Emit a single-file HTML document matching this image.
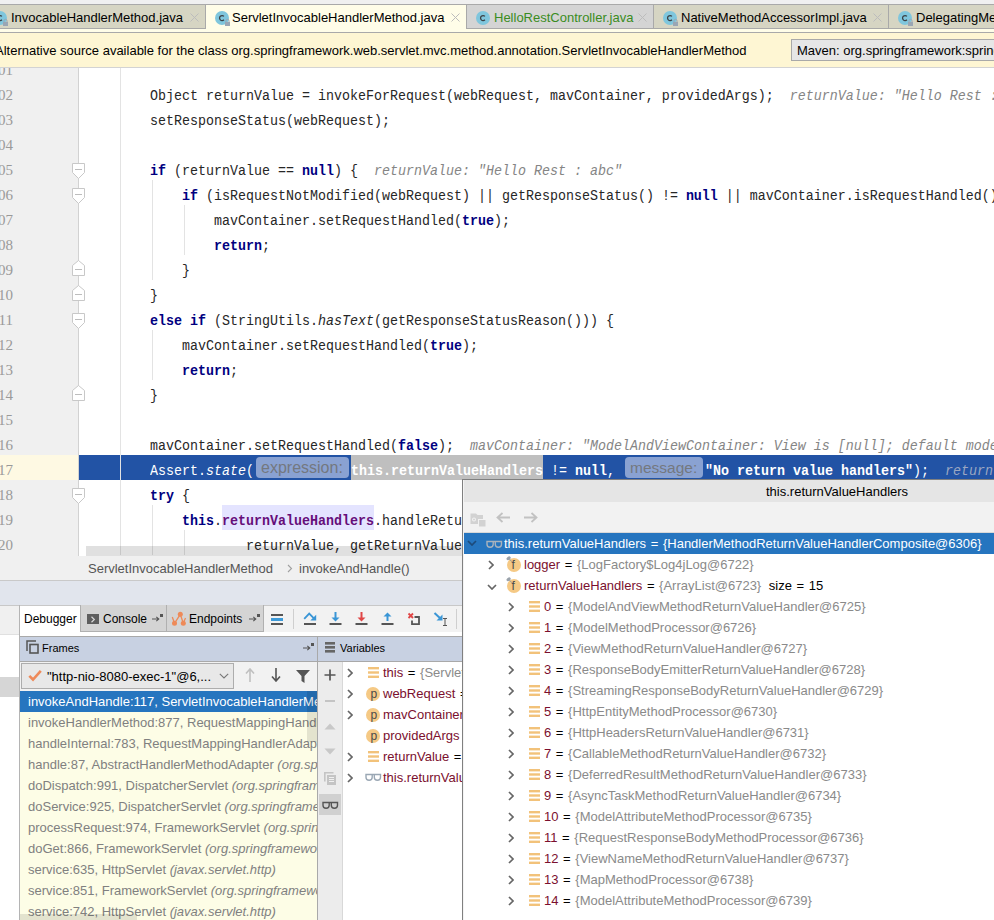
<!DOCTYPE html>
<html><head><meta charset="utf-8"><style>
*{margin:0;padding:0;box-sizing:border-box}
html,body{width:994px;height:920px;overflow:hidden;background:#fff}
body{position:relative;font-family:"Liberation Sans",sans-serif;font-size:13px;color:#000}
.a{position:absolute}
.ui{position:absolute;font-family:"Liberation Sans",sans-serif;font-size:13px;white-space:pre;line-height:15px}
.mono{font-family:"Liberation Mono",monospace;font-size:13.333px;white-space:pre;line-height:15px;transform:scaleY(1.15);transform-origin:0 11px}
.cic{position:absolute;width:14px;height:14px;border-radius:50%;background:#7fc6dd}
.cic:after{content:"c";position:absolute;left:3px;top:-1px;font:bold 11px "Liberation Sans";color:#3a3f44}
.lock{position:absolute;width:6px;height:5px;background:#9aa6b4}
.lock:before{content:"";position:absolute;left:1px;top:-3px;width:4px;height:3px;border:1px solid #9aa6b4;border-bottom:none;border-radius:2px 2px 0 0}
.kw{color:#000080;font-weight:bold}
.fld{color:#660e7a;font-weight:bold}
.hint{color:#858585;font-style:italic}
</style></head><body>
<div class="a" style="left:0px;top:67px;width:79px;height:489px;background:#f0f0f0;"></div>
<div class="a" style="left:78px;top:67px;width:1px;height:489px;background:#d2d2d2;"></div>
<div class="a" style="left:0px;top:455px;width:78px;height:25px;background:#fef9e3;"></div>
<div class="a" style="left:79px;top:455px;width:915px;height:25px;background:#2253a5;"></div>
<div class="a" style="left:222px;top:505px;width:152px;height:25px;background:#e4e4ff;"></div>
<div class="a" style="left:120px;top:55px;width:1px;height:500px;background:#e3e3e3;"></div>
<div class="a" style="left:152px;top:180px;width:1px;height:100px;background:#e3e3e3;"></div>
<div class="a" style="left:184px;top:205px;width:1px;height:50px;background:#e3e3e3;"></div>
<div class="a" style="left:152px;top:330px;width:1px;height:50px;background:#e3e3e3;"></div>
<div class="a" style="left:152px;top:505px;width:1px;height:50px;background:#e3e3e3;"></div>
<div class="a" style="left:184px;top:530px;width:1px;height:25px;background:#e3e3e3;"></div>
<div style="position:absolute;left:-20px;width:33px;text-align:right;top:61px;color:#9a9a9a;font-family:'Liberation Serif',serif;font-size:15px;line-height:18px;white-space:pre">101</div>
<div style="position:absolute;left:-20px;width:33px;text-align:right;top:86px;color:#9a9a9a;font-family:'Liberation Serif',serif;font-size:15px;line-height:18px;white-space:pre">102</div>
<div style="position:absolute;left:-20px;width:33px;text-align:right;top:111px;color:#9a9a9a;font-family:'Liberation Serif',serif;font-size:15px;line-height:18px;white-space:pre">103</div>
<div style="position:absolute;left:-20px;width:33px;text-align:right;top:136px;color:#9a9a9a;font-family:'Liberation Serif',serif;font-size:15px;line-height:18px;white-space:pre">104</div>
<div style="position:absolute;left:-20px;width:33px;text-align:right;top:161px;color:#9a9a9a;font-family:'Liberation Serif',serif;font-size:15px;line-height:18px;white-space:pre">105</div>
<div style="position:absolute;left:-20px;width:33px;text-align:right;top:186px;color:#9a9a9a;font-family:'Liberation Serif',serif;font-size:15px;line-height:18px;white-space:pre">106</div>
<div style="position:absolute;left:-20px;width:33px;text-align:right;top:211px;color:#9a9a9a;font-family:'Liberation Serif',serif;font-size:15px;line-height:18px;white-space:pre">107</div>
<div style="position:absolute;left:-20px;width:33px;text-align:right;top:236px;color:#9a9a9a;font-family:'Liberation Serif',serif;font-size:15px;line-height:18px;white-space:pre">108</div>
<div style="position:absolute;left:-20px;width:33px;text-align:right;top:261px;color:#9a9a9a;font-family:'Liberation Serif',serif;font-size:15px;line-height:18px;white-space:pre">109</div>
<div style="position:absolute;left:-20px;width:33px;text-align:right;top:286px;color:#9a9a9a;font-family:'Liberation Serif',serif;font-size:15px;line-height:18px;white-space:pre">110</div>
<div style="position:absolute;left:-20px;width:33px;text-align:right;top:311px;color:#9a9a9a;font-family:'Liberation Serif',serif;font-size:15px;line-height:18px;white-space:pre">111</div>
<div style="position:absolute;left:-20px;width:33px;text-align:right;top:336px;color:#9a9a9a;font-family:'Liberation Serif',serif;font-size:15px;line-height:18px;white-space:pre">112</div>
<div style="position:absolute;left:-20px;width:33px;text-align:right;top:361px;color:#9a9a9a;font-family:'Liberation Serif',serif;font-size:15px;line-height:18px;white-space:pre">113</div>
<div style="position:absolute;left:-20px;width:33px;text-align:right;top:386px;color:#9a9a9a;font-family:'Liberation Serif',serif;font-size:15px;line-height:18px;white-space:pre">114</div>
<div style="position:absolute;left:-20px;width:33px;text-align:right;top:411px;color:#9a9a9a;font-family:'Liberation Serif',serif;font-size:15px;line-height:18px;white-space:pre">115</div>
<div style="position:absolute;left:-20px;width:33px;text-align:right;top:436px;color:#9a9a9a;font-family:'Liberation Serif',serif;font-size:15px;line-height:18px;white-space:pre">116</div>
<div style="position:absolute;left:-20px;width:33px;text-align:right;top:461px;color:#9a9a9a;font-family:'Liberation Serif',serif;font-size:15px;line-height:18px;white-space:pre">117</div>
<div style="position:absolute;left:-20px;width:33px;text-align:right;top:486px;color:#9a9a9a;font-family:'Liberation Serif',serif;font-size:15px;line-height:18px;white-space:pre">118</div>
<div style="position:absolute;left:-20px;width:33px;text-align:right;top:511px;color:#9a9a9a;font-family:'Liberation Serif',serif;font-size:15px;line-height:18px;white-space:pre">119</div>
<div style="position:absolute;left:-20px;width:33px;text-align:right;top:536px;color:#9a9a9a;font-family:'Liberation Serif',serif;font-size:15px;line-height:18px;white-space:pre">120</div>
<div class="mono" style="position:absolute;left:86px;top:89px;color:#262626">        Object returnValue = invokeForRequest(webRequest, mavContainer, providedArgs);  <span class="hint">returnValue: "Hello Rest : abc"</span></div>
<div class="mono" style="position:absolute;left:86px;top:114px;color:#262626">        setResponseStatus(webRequest);</div>
<div class="mono" style="position:absolute;left:86px;top:164px;color:#262626">        <span class="kw">if</span> (returnValue == <span class="kw">null</span>) {  <span class="hint">returnValue: "Hello Rest : abc"</span></div>
<div class="mono" style="position:absolute;left:86px;top:189px;color:#262626">            <span class="kw">if</span> (isRequestNotModified(webRequest) || getResponseStatus() != <span class="kw">null</span> || mavContainer.isRequestHandled()) {</div>
<div class="mono" style="position:absolute;left:86px;top:214px;color:#262626">                mavContainer.setRequestHandled(<span class="kw">true</span>);</div>
<div class="mono" style="position:absolute;left:86px;top:239px;color:#262626">                <span class="kw">return</span>;</div>
<div class="mono" style="position:absolute;left:86px;top:264px;color:#262626">            }</div>
<div class="mono" style="position:absolute;left:86px;top:289px;color:#262626">        }</div>
<div class="mono" style="position:absolute;left:86px;top:314px;color:#262626">        <span class="kw">else if</span> (StringUtils.<i>hasText</i>(getResponseStatusReason())) {</div>
<div class="mono" style="position:absolute;left:86px;top:339px;color:#262626">            mavContainer.setRequestHandled(<span class="kw">true</span>);</div>
<div class="mono" style="position:absolute;left:86px;top:364px;color:#262626">            <span class="kw">return</span>;</div>
<div class="mono" style="position:absolute;left:86px;top:389px;color:#262626">        }</div>
<div class="mono" style="position:absolute;left:86px;top:439px;color:#262626">        mavContainer.setRequestHandled(<span class="kw">false</span>);  <span class="hint">mavContainer: "ModelAndViewContainer: View is [null]; default model {}"</span></div>
<div class="mono" style="position:absolute;left:86px;top:489px;color:#262626">        <span class="kw">try</span> {</div>
<div class="mono" style="position:absolute;left:86px;top:514px;color:#262626">            <span class="kw">this</span>.<span class="fld">returnValueHandlers</span>.handleReturnValue(</div>
<div class="mono" style="position:absolute;left:86px;top:539px;color:#262626">                    returnValue, getReturnValueType(returnValue), mavContainer, webRequest);</div>
<div class="mono" style="position:absolute;left:150px;top:464px;color:#fff;">Assert.<i>state</i>(</div>
<div class="a" style="left:256px;top:457px;width:93px;height:21px;background:#8aa2d2;border-radius:4px"></div>
<div class="ui" style="left:261px;top:459px;color:#74787f;font-size:16px;line-height:17px">expression:</div>
<div class="a" style="left:351px;top:455px;width:192px;height:25px;background:#bfbfbf;"></div>
<div class="mono" style="position:absolute;left:351px;top:464px;color:#fff;"><b>this.returnValueHandlers</b></div>
<div class="mono" style="position:absolute;left:543px;top:464px;color:#fff;"> != <b>null</b>, </div>
<div class="a" style="left:625px;top:457px;width:78px;height:21px;background:#8aa2d2;border-radius:4px"></div>
<div class="ui" style="left:630px;top:459px;color:#74787f;font-size:15.5px;line-height:17px">message:</div>
<div class="mono" style="position:absolute;left:705px;top:464px;color:#fff;"><b>"No return value handlers"</b>);  </div>
<div class="mono" style="position:absolute;left:945px;top:464px;color:#9ba7c2;"><i>returnValue</i></div>
<svg class="a" style="left:72px;top:163px" width="13" height="16" viewBox="0 0 13 16"><path d="M0.5 0.5H12.5V9.5L6.5 15.5L0.5 9.5Z" fill="#fff" stroke="#c8c8c8"/><path d="M3 6.5H10" stroke="#bdbdbd"/></svg>
<svg class="a" style="left:72px;top:188px" width="13" height="16" viewBox="0 0 13 16"><path d="M0.5 0.5H12.5V9.5L6.5 15.5L0.5 9.5Z" fill="#fff" stroke="#c8c8c8"/><path d="M3 6.5H10" stroke="#bdbdbd"/></svg>
<svg class="a" style="left:72px;top:313px" width="13" height="16" viewBox="0 0 13 16"><path d="M0.5 0.5H12.5V9.5L6.5 15.5L0.5 9.5Z" fill="#fff" stroke="#c8c8c8"/><path d="M3 6.5H10" stroke="#bdbdbd"/></svg>
<svg class="a" style="left:72px;top:488px" width="13" height="16" viewBox="0 0 13 16"><path d="M0.5 0.5H12.5V9.5L6.5 15.5L0.5 9.5Z" fill="#fff" stroke="#c8c8c8"/><path d="M3 6.5H10" stroke="#bdbdbd"/></svg>
<svg class="a" style="left:72px;top:260px" width="13" height="16" viewBox="0 0 13 16"><path d="M0.5 5.5L6.5 0.5L12.5 5.5V15.5H0.5Z" fill="#fff" stroke="#c8c8c8"/><path d="M3 9.5H10" stroke="#bdbdbd"/></svg>
<svg class="a" style="left:72px;top:285px" width="13" height="16" viewBox="0 0 13 16"><path d="M0.5 5.5L6.5 0.5L12.5 5.5V15.5H0.5Z" fill="#fff" stroke="#c8c8c8"/><path d="M3 9.5H10" stroke="#bdbdbd"/></svg>
<svg class="a" style="left:72px;top:385px" width="13" height="16" viewBox="0 0 13 16"><path d="M0.5 5.5L6.5 0.5L12.5 5.5V15.5H0.5Z" fill="#fff" stroke="#c8c8c8"/><path d="M3 9.5H10" stroke="#bdbdbd"/></svg>
<div class="a" style="left:86px;top:546px;width:900px;height:10px;background:rgba(0,0,0,0.12);"></div>
<div class="a" style="left:0px;top:556px;width:994px;height:24px;background:#f0f0f0;"></div>
<div class="a" style="left:0px;top:580px;width:994px;height:1px;background:#c9c9c9;"></div>
<div class="ui" style="left:88px;top:561px;color:#555;">ServletInvocableHandlerMethod</div>
<svg class="a" style="left:287px;top:564px" width="6" height="9" viewBox="0 0 6 9"><path d="M1 1L4.5 4.5L1 8" stroke="#a0a0a0" fill="none" stroke-width="1.1"/></svg>
<div class="ui" style="left:299px;top:561px;color:#555;">invokeAndHandle()</div>
<div class="a" style="left:0px;top:581px;width:994px;height:24px;background:#e1e5ed;"></div>
<div class="a" style="left:0px;top:605px;width:994px;height:1px;background:#c8c8c8;"></div>
<div class="a" style="left:0px;top:606px;width:19px;height:28px;background:#f0f0f0;"></div>
<div class="a" style="left:0px;top:634px;width:19px;height:1px;background:#e0e0e0;"></div>
<div class="a" style="left:0px;top:677px;width:19px;height:20px;background:#d6d6d6;"></div>
<div class="a" style="left:19px;top:605px;width:1px;height:315px;background:#b4b4b4;"></div>
<div class="a" style="left:20px;top:606px;width:974px;height:31px;background:#f2f2f2;"></div>
<div class="a" style="left:20px;top:606px;width:60px;height:31px;background:#ffffff;"></div>
<div class="ui" style="left:24px;top:612px;color:#000;font-size:12px">Debugger</div>
<div class="a" style="left:80px;top:605px;width:1px;height:27px;background:#b0b0b0;"></div>
<div class="a" style="left:81px;top:605px;width:86px;height:27px;background:#d4d4d4;"></div>
<div class="a" style="left:81px;top:631px;width:86px;height:1px;background:#b0b0b0;"></div>
<div class="a" style="left:166px;top:605px;width:1px;height:27px;background:#b0b0b0;"></div>
<div class="a" style="left:167px;top:605px;width:97px;height:27px;background:#d4d4d4;"></div>
<div class="a" style="left:167px;top:631px;width:97px;height:1px;background:#b0b0b0;"></div>
<div class="a" style="left:263px;top:605px;width:1px;height:27px;background:#b0b0b0;"></div>
<div class="a" style="left:87px;top:614px;width:12px;height:10px;background:#5e5e5e;"></div>
<svg class="a" style="left:90px;top:616px" width="6" height="7" viewBox="0 0 6 7"><path d="M1.5 0.8L4.3 3.5L1.5 6.2" stroke="#d8d8d8" fill="none" stroke-width="1.2"/></svg>
<div class="ui" style="left:103px;top:612px;color:#000;font-size:12px">Console</div>
<svg class="a" style="left:152px;top:614px" width="12" height="8" viewBox="0 0 12 8"><path d="M0 5H6.5M4.3 2.8L6.8 5L4.3 7.2" stroke="#555" fill="none" stroke-width="1.1"/><rect x="8" y="0" width="3" height="3" fill="#555"/></svg>
<svg class="a" style="left:171px;top:611px" width="16" height="16" viewBox="0 0 16 16"><path d="M3.5 12.3L9.3 3.3L12.3 12.3M3.5 12.3L1.3 6M12.3 12.3L14.5 7" stroke="#ee8a58" fill="none" stroke-width="1.3"/><circle cx="9.3" cy="3.3" r="2.5" fill="#ee8a58"/><circle cx="3.5" cy="12.3" r="2.5" fill="#ee8a58"/><circle cx="12.3" cy="12.3" r="2.5" fill="#ee8a58"/></svg>
<div class="ui" style="left:189px;top:612px;color:#000;font-size:12px">Endpoints</div>
<svg class="a" style="left:249px;top:614px" width="12" height="8" viewBox="0 0 12 8"><path d="M0 5H6.5M4.3 2.8L6.8 5L4.3 7.2" stroke="#555" fill="none" stroke-width="1.1"/><rect x="8" y="0" width="3" height="3" fill="#555"/></svg>
<svg class="a" style="left:270px;top:613px" width="14" height="12" viewBox="0 0 14 12"><rect x="1" y="1" width="12" height="2" fill="#555"/><rect x="1" y="5" width="12" height="3" fill="#3d9ad8"/><rect x="1" y="10" width="12" height="2" fill="#555"/></svg>
<div class="a" style="left:293px;top:609px;width:1px;height:20px;background:#cfcfcf;"></div>
<svg class="a" style="left:302px;top:611px" width="16" height="16" viewBox="0 0 16 16"><path d="M2.2 7.8L7.2 2.6L12.2 7.6" stroke="#3a96d6" fill="none" stroke-width="1.8"/><path d="M8.3 9.6H14.2V3.8Z" fill="#3a96d6"/><rect x="2" y="12" width="12" height="2" fill="#555"/></svg>
<svg class="a" style="left:329px;top:611px" width="16" height="16" viewBox="0 0 16 16"><path d="M6.5 1V8" stroke="#3a96d6" stroke-width="2"/><path d="M2.5 6.5H10.5L6.5 10.5Z" fill="#3a96d6"/><rect x="0.5" y="12" width="12" height="2" fill="#555"/></svg>
<svg class="a" style="left:355px;top:611px" width="16" height="16" viewBox="0 0 16 16"><path d="M6.5 1V8" stroke="#e04646" stroke-width="2"/><path d="M2.5 6.5H10.5L6.5 10.5Z" fill="#e04646"/><rect x="0.5" y="12" width="12" height="2" fill="#555"/></svg>
<svg class="a" style="left:381px;top:611px" width="16" height="16" viewBox="0 0 16 16"><path d="M6.5 4V10" stroke="#3a96d6" stroke-width="2"/><path d="M2.5 5.5H10.5L6.5 1.5Z" fill="#3a96d6"/><rect x="0.5" y="12" width="12" height="2" fill="#555"/></svg>
<svg class="a" style="left:407px;top:611px" width="16" height="16" viewBox="0 0 16 16"><path d="M1.5 2.5L6 7M6 2.5L1.5 7" stroke="#e04646" stroke-width="1.8"/><path d="M7.5 6H12V13.2H5V9.5" stroke="#555" fill="none" stroke-width="1.8"/></svg>
<svg class="a" style="left:433px;top:611px" width="16" height="16" viewBox="0 0 16 16"><path d="M1.5 2L8 8" stroke="#3a96d6" stroke-width="2"/><path d="M9.5 3.5V9.5H3.5Z" fill="#3a96d6"/><path d="M10 7.5H14M10 14.5H14M12 7.5V14.5" stroke="#555" stroke-width="1"/></svg>
<div class="a" style="left:456px;top:609px;width:1px;height:20px;background:#cfcfcf;"></div>
<div class="a" style="left:20px;top:632px;width:974px;height:4px;background:#ffffff;"></div>
<div class="a" style="left:20px;top:636px;width:974px;height:1px;background:#a9a9a9;"></div>
<div class="a" style="left:20px;top:637px;width:297px;height:24px;background:#c8d1e2;"></div>
<div class="a" style="left:317px;top:637px;width:1px;height:283px;background:#a9a9a9;"></div>
<div class="a" style="left:318px;top:637px;width:676px;height:24px;background:#c8d1e2;"></div>
<div class="a" style="left:20px;top:661px;width:974px;height:1px;background:#a9a9a9;"></div>
<svg class="a" style="left:26px;top:640px" width="13" height="14" viewBox="0 0 13 14"><path d="M1 11V1H10" stroke="#555" fill="none" stroke-width="1.5"/><rect x="4" y="4.5" width="8" height="8.5" stroke="#555" fill="none" stroke-width="1.6"/></svg>
<div class="ui" style="left:42px;top:641px;color:#000;font-size:11px">Frames</div>
<svg class="a" style="left:303px;top:643px" width="12" height="8" viewBox="0 0 12 8"><path d="M0 5H6.5M4.3 2.8L6.8 5L4.3 7.2" stroke="#555" fill="none" stroke-width="1.1"/><rect x="8" y="0" width="3" height="3" fill="#555"/></svg>
<svg class="a" style="left:325px;top:642px" width="10" height="11" viewBox="0 0 10 11"><rect x="0" y="0" width="10" height="2.6" fill="#666"/><rect x="0" y="4" width="10" height="2.6" fill="#666"/><rect x="0" y="8" width="10" height="2.6" fill="#666"/></svg>
<div class="ui" style="left:340px;top:641px;color:#000;font-size:11px">Variables</div>
<div class="a" style="left:20px;top:662px;width:297px;height:29px;background:#f2f2f2;"></div>
<div class="a" style="left:21px;top:663px;width:213px;height:26px;background:#e8e8e8;border:1px solid #adadad"></div>
<svg class="a" style="left:28px;top:669px" width="14" height="13" viewBox="0 0 14 13"><path d="M1.3 6.8L5 10.5L12.8 1.8" stroke="#ee8a5a" fill="none" stroke-width="2.6"/></svg>
<div class="ui" style="left:47px;top:669px;color:#000;">"http-nio-8080-exec-1"@6,...</div>
<svg class="a" style="left:219px;top:673px" width="10" height="6" viewBox="0 0 10 6"><path d="M0.8 0.8L5 5L9.2 0.8" stroke="#777" fill="none" stroke-width="1.1"/></svg>
<svg class="a" style="left:245px;top:668px" width="10" height="14" viewBox="0 0 10 14"><path d="M5 1V14M1 5.5L5 1L9 5.5" stroke="#c0c0c0" fill="none" stroke-width="1.6"/></svg>
<svg class="a" style="left:271px;top:668px" width="10" height="14" viewBox="0 0 10 14"><path d="M5 0V13M1 8.5L5 13L9 8.5" stroke="#555" fill="none" stroke-width="1.6"/></svg>
<svg class="a" style="left:296px;top:670px" width="14" height="13" viewBox="0 0 14 13"><path d="M0 0H14L8.5 6V13L5.5 11V6Z" fill="#555"/></svg>
<div class="a" style="left:20px;top:691px;width:297px;height:229px;background:#fdfde6;"></div>
<div class="a" style="left:20px;top:691px;width:297px;height:21px;background:#2675bf;"></div>
<div class="a" style="left:20px;top:691px;width:297px;height:229px;overflow:hidden">
<div class="ui" style="left:8px;top:3px;color:#fff">invokeAndHandle:117, ServletInvocableHandlerMethod<i> (org.springframework.web.servlet.mvc.method.annotation)</i></div>
<div class="ui" style="left:8px;top:24px;color:#808080">invokeHandlerMethod:877, RequestMappingHandlerAdapter<i> (org.springframework.web.servlet.mvc.method.annotation)</i></div>
<div class="ui" style="left:8px;top:45px;color:#808080">handleInternal:783, RequestMappingHandlerAdapter<i> (org.springframework.web.servlet.mvc.method.annotation)</i></div>
<div class="ui" style="left:8px;top:66px;color:#808080">handle:87, AbstractHandlerMethodAdapter<i> (org.springframework.web.servlet.mvc.method)</i></div>
<div class="ui" style="left:8px;top:87px;color:#808080">doDispatch:991, DispatcherServlet<i> (org.springframework.web.servlet)</i></div>
<div class="ui" style="left:8px;top:108px;color:#808080">doService:925, DispatcherServlet<i> (org.springframework.web.servlet)</i></div>
<div class="ui" style="left:8px;top:129px;color:#808080">processRequest:974, FrameworkServlet<i> (org.springframework.web.servlet)</i></div>
<div class="ui" style="left:8px;top:150px;color:#808080">doGet:866, FrameworkServlet<i> (org.springframework.web.servlet)</i></div>
<div class="ui" style="left:8px;top:171px;color:#808080">service:635, HttpServlet<i> (javax.servlet.http)</i></div>
<div class="ui" style="left:8px;top:192px;color:#808080">service:851, FrameworkServlet<i> (org.springframework.web.servlet)</i></div>
<div class="ui" style="left:8px;top:213px;color:#808080">service:742, HttpServlet<i> (javax.servlet.http)</i></div>
</div>
<div class="a" style="left:307px;top:691px;width:10px;height:51px;background:rgba(0,0,0,0.1);"></div>
<div class="a" style="left:20px;top:914px;width:117px;height:6px;background:rgba(0,0,0,0.1);"></div>
<div class="a" style="left:318px;top:662px;width:24px;height:258px;background:#ececec;"></div>
<div class="a" style="left:342px;top:662px;width:1px;height:258px;background:#d8d8d8;"></div>
<svg class="a" style="left:324px;top:669px" width="12" height="12" viewBox="0 0 12 12"><path d="M6 0.5V11.5M0.5 6H11.5" stroke="#555" stroke-width="1.7"/></svg>
<div class="a" style="left:325px;top:700px;width:10px;height:2px;background:#c4c4c4;"></div>
<svg class="a" style="left:324px;top:722px" width="12" height="8" viewBox="0 0 12 8"><path d="M0.5 7.5L6 1.5L11.5 7.5Z" fill="#c8c8c8"/></svg>
<svg class="a" style="left:324px;top:748px" width="12" height="8" viewBox="0 0 12 8"><path d="M0.5 0.5L6 6.5L11.5 0.5Z" fill="#c8c8c8"/></svg>
<svg class="a" style="left:323px;top:771px" width="14" height="15" viewBox="0 0 14 15"><path d="M1.8 10.5V1.8H10.5" stroke="#c4c4c4" fill="none" stroke-width="1.6"/><rect x="4" y="4" width="9" height="10" fill="#c4c4c4"/><path d="M6 6.5H11M6 8.5H11M6 10.5H11" stroke="#f0f0f0" stroke-width="1"/></svg>
<div class="a" style="left:319px;top:794px;width:22px;height:21px;background:#d0d0d0;"></div>
<svg class="a" style="left:322px;top:801px" width="17" height="9" viewBox="0 0 17 9"><path d="M1 1.5H7.2V4.3Q7.2 7.3 4.1 7.3Q1 7.3 1 4.3Z M9.3 1.5H15.5V4.3Q15.5 7.3 12.4 7.3Q9.3 7.3 9.3 4.3Z M7 1.5H9.5" stroke="#555" fill="none" stroke-width="1.4"/></svg>
<div class="a" style="left:343px;top:662px;width:119px;height:258px;overflow:hidden">
<svg class="a" style="left:4px;top:6px" width="6" height="10" viewBox="0 0 6 10"><path d="M1 1L5 5L1 9" stroke="#666" fill="none" stroke-width="1.7"/></svg>
<svg class="a" style="left:25px;top:5px" width="11" height="11" viewBox="0 0 11 11"><rect x="0" y="0" width="11" height="2.4" fill="#f2c27a"/><rect x="0" y="4.3" width="11" height="2.4" fill="#f2c27a"/><rect x="0" y="8.6" width="11" height="2.4" fill="#f2c27a"/></svg>
<div class="ui" style="left:40px;top:3px;color:#7b0f2e;word-spacing:1px">this <span style="color:#000">=</span> <span style="color:#8a8a8a">{ServletInvocableHandlerMethod@6305}</span></div>
<svg class="a" style="left:4px;top:27px" width="6" height="10" viewBox="0 0 6 10"><path d="M1 1L5 5L1 9" stroke="#666" fill="none" stroke-width="1.7"/></svg>
<div class="a" style="left:23px;top:25px;width:14px;height:14px;border-radius:50%;background:#f5c985"></div>
<div class="ui" style="left:27.5px;top:25px;color:#4a4a4a;font-size:12px">p</div>
<div class="ui" style="left:40px;top:24px;color:#7b0f2e;word-spacing:1px">webRequest <span style="color:#000">=</span> <span style="color:#8a8a8a">{ServletWebRequest@6310}</span></div>
<svg class="a" style="left:4px;top:48px" width="6" height="10" viewBox="0 0 6 10"><path d="M1 1L5 5L1 9" stroke="#666" fill="none" stroke-width="1.7"/></svg>
<div class="a" style="left:23px;top:46px;width:14px;height:14px;border-radius:50%;background:#f5c985"></div>
<div class="ui" style="left:27.5px;top:46px;color:#4a4a4a;font-size:12px">p</div>
<div class="ui" style="left:40px;top:45px;color:#7b0f2e;word-spacing:1px">mavContainer <span style="color:#000">=</span> <span style="color:#8a8a8a">{ModelAndViewContainer@6311}</span></div>
<div class="a" style="left:23px;top:67px;width:14px;height:14px;border-radius:50%;background:#f5c985"></div>
<div class="ui" style="left:27.5px;top:67px;color:#4a4a4a;font-size:12px">p</div>
<div class="ui" style="left:40px;top:66px;color:#7b0f2e;word-spacing:1px">providedArgs <span style="color:#000">=</span> <span style="color:#8a8a8a">{Object[0]@6312}</span></div>
<svg class="a" style="left:4px;top:90px" width="6" height="10" viewBox="0 0 6 10"><path d="M1 1L5 5L1 9" stroke="#666" fill="none" stroke-width="1.7"/></svg>
<svg class="a" style="left:25px;top:89px" width="11" height="11" viewBox="0 0 11 11"><rect x="0" y="0" width="11" height="2.4" fill="#f2c27a"/><rect x="0" y="4.3" width="11" height="2.4" fill="#f2c27a"/><rect x="0" y="8.6" width="11" height="2.4" fill="#f2c27a"/></svg>
<div class="ui" style="left:40px;top:87px;color:#7b0f2e;word-spacing:1px">returnValue <span style="color:#000">=</span> <span style="color:#8a8a8a">"Hello Rest : abc"</span></div>
<svg class="a" style="left:4px;top:111px" width="6" height="10" viewBox="0 0 6 10"><path d="M1 1L5 5L1 9" stroke="#666" fill="none" stroke-width="1.7"/></svg>
<svg class="a" style="left:22px;top:111px" width="17" height="9" viewBox="0 0 17 9"><path d="M1 1.5H7.2V4.3Q7.2 7.3 4.1 7.3Q1 7.3 1 4.3Z M9.3 1.5H15.5V4.3Q15.5 7.3 12.4 7.3Q9.3 7.3 9.3 4.3Z M7 1.5H9.5" stroke="#9aa7b4" fill="none" stroke-width="1.4"/></svg>
<div class="ui" style="left:40px;top:108px;color:#7b0f2e;word-spacing:1px">this.returnValueHandlers <span style="color:#000">=</span> <span style="color:#8a8a8a">{HandlerMethodReturnValueHandlerComposite@6306}</span></div>
</div>
<div class="a" style="left:462px;top:479px;width:532px;height:441px;background:#ffffff;"></div>
<div class="a" style="left:462px;top:479px;width:1px;height:441px;background:#808080;"></div>
<div class="a" style="left:463px;top:480px;width:1px;height:441px;background:#f4f4f4;"></div>
<div class="a" style="left:462px;top:479px;width:532px;height:1px;background:#808080;"></div>
<div class="a" style="left:464px;top:480px;width:530px;height:23px;background:#e5e5e5;"></div>
<div class="ui" style="left:766px;top:484px;color:#000;">this.returnValueHandlers</div>
<div class="a" style="left:464px;top:502px;width:530px;height:30px;background:#f2f2f2;"></div>
<div class="a" style="left:464px;top:532px;width:530px;height:1px;background:#d9d9d9;"></div>
<svg class="a" style="left:470px;top:511px" width="17" height="16" viewBox="0 0 17 16"><path d="M0.5 2.5H6L7.5 4H13V8H8V13H0.5Z" fill="#d2d2d2"/><circle cx="4" cy="8.5" r="2" fill="#f2f2f2"/><circle cx="4" cy="8.5" r="1" fill="#d2d2d2"/><rect x="9" y="9" width="6.5" height="6.5" fill="#d2d2d2"/></svg>
<svg class="a" style="left:496px;top:512px" width="15" height="11" viewBox="0 0 15 11"><path d="M14 5.5H2M6.5 1L1.5 5.5L6.5 10" stroke="#c2c2c2" fill="none" stroke-width="1.8"/></svg>
<svg class="a" style="left:523px;top:512px" width="15" height="11" viewBox="0 0 15 11"><path d="M1 5.5H13M8.5 1L13.5 5.5L8.5 10" stroke="#c2c2c2" fill="none" stroke-width="1.8"/></svg>
<div class="a" style="left:464px;top:533px;width:530px;height:21px;background:#2675bf;"></div>
<svg class="a" style="left:467px;top:540px" width="10" height="6" viewBox="0 0 10 6"><path d="M1 1L5 5L9 1" stroke="#1d4a7a" fill="none" stroke-width="1.7"/></svg>
<svg class="a" style="left:486px;top:540px" width="17" height="9" viewBox="0 0 17 9"><path d="M1 1.5H7.2V4.3Q7.2 7.3 4.1 7.3Q1 7.3 1 4.3Z M9.3 1.5H15.5V4.3Q15.5 7.3 12.4 7.3Q9.3 7.3 9.3 4.3Z M7 1.5H9.5" stroke="#a9b3bd" fill="none" stroke-width="1.4"/></svg>
<div class="ui" style="left:504px;top:536px;color:#fff;word-spacing:1px">this.returnValueHandlers = {HandlerMethodReturnValueHandlerComposite@6306}</div>
<svg class="a" style="left:488px;top:560px" width="6" height="10" viewBox="0 0 6 10"><path d="M1 1L5 5L1 9" stroke="#666" fill="none" stroke-width="1.7"/></svg>
<div class="a" style="left:507px;top:558px;width:14px;height:14px;border-radius:50%;background:#f5c985"></div>
<div class="ui" style="left:511.5px;top:558px;color:#4a4a4a;font-size:12px">f</div>
<svg class="a" style="left:506px;top:556px" width="8" height="8" viewBox="0 0 8 8"><ellipse cx="2.6" cy="2.3" rx="2.3" ry="1.6" transform="rotate(-35 2.6 2.3)" fill="#9aa2ab"/><path d="M3.5 3.2L6 5.8" stroke="#8a929b" stroke-width="0.9"/></svg>
<div class="ui" style="left:524px;top:557px;color:#7b0f2e;word-spacing:1px">logger <span style="color:#000">=</span> <span style="color:#8a8a8a">{LogFactory$Log4jLog@6722}</span></div>
<svg class="a" style="left:487px;top:584px" width="10" height="6" viewBox="0 0 10 6"><path d="M1 1L5 5L9 1" stroke="#666" fill="none" stroke-width="1.7"/></svg>
<div class="a" style="left:507px;top:579px;width:14px;height:14px;border-radius:50%;background:#f5c985"></div>
<div class="ui" style="left:511.5px;top:579px;color:#4a4a4a;font-size:12px">f</div>
<svg class="a" style="left:506px;top:577px" width="8" height="8" viewBox="0 0 8 8"><ellipse cx="2.6" cy="2.3" rx="2.3" ry="1.6" transform="rotate(-35 2.6 2.3)" fill="#9aa2ab"/><path d="M3.5 3.2L6 5.8" stroke="#8a929b" stroke-width="0.9"/></svg>
<div class="ui" style="left:524px;top:578px;color:#7b0f2e;word-spacing:1px">returnValueHandlers <span style="color:#000">=</span> <span style="color:#8a8a8a">{ArrayList@6723}</span><span style="color:#000;padding-left:3px"> size = 15</span></div>
<svg class="a" style="left:508px;top:602px" width="6" height="10" viewBox="0 0 6 10"><path d="M1 1L5 5L1 9" stroke="#666" fill="none" stroke-width="1.7"/></svg>
<svg class="a" style="left:529px;top:601px" width="11" height="11" viewBox="0 0 11 11"><rect x="0" y="0" width="11" height="2.4" fill="#f2c27a"/><rect x="0" y="4.3" width="11" height="2.4" fill="#f2c27a"/><rect x="0" y="8.6" width="11" height="2.4" fill="#f2c27a"/></svg>
<div class="ui" style="left:544px;top:599px;color:#7b0f2e;word-spacing:1px">0 <span style="color:#000">=</span> <span style="color:#8a8a8a">{ModelAndViewMethodReturnValueHandler@6725}</span></div>
<svg class="a" style="left:508px;top:623px" width="6" height="10" viewBox="0 0 6 10"><path d="M1 1L5 5L1 9" stroke="#666" fill="none" stroke-width="1.7"/></svg>
<svg class="a" style="left:529px;top:622px" width="11" height="11" viewBox="0 0 11 11"><rect x="0" y="0" width="11" height="2.4" fill="#f2c27a"/><rect x="0" y="4.3" width="11" height="2.4" fill="#f2c27a"/><rect x="0" y="8.6" width="11" height="2.4" fill="#f2c27a"/></svg>
<div class="ui" style="left:544px;top:620px;color:#7b0f2e;word-spacing:1px">1 <span style="color:#000">=</span> <span style="color:#8a8a8a">{ModelMethodProcessor@6726}</span></div>
<svg class="a" style="left:508px;top:644px" width="6" height="10" viewBox="0 0 6 10"><path d="M1 1L5 5L1 9" stroke="#666" fill="none" stroke-width="1.7"/></svg>
<svg class="a" style="left:529px;top:643px" width="11" height="11" viewBox="0 0 11 11"><rect x="0" y="0" width="11" height="2.4" fill="#f2c27a"/><rect x="0" y="4.3" width="11" height="2.4" fill="#f2c27a"/><rect x="0" y="8.6" width="11" height="2.4" fill="#f2c27a"/></svg>
<div class="ui" style="left:544px;top:641px;color:#7b0f2e;word-spacing:1px">2 <span style="color:#000">=</span> <span style="color:#8a8a8a">{ViewMethodReturnValueHandler@6727}</span></div>
<svg class="a" style="left:508px;top:665px" width="6" height="10" viewBox="0 0 6 10"><path d="M1 1L5 5L1 9" stroke="#666" fill="none" stroke-width="1.7"/></svg>
<svg class="a" style="left:529px;top:664px" width="11" height="11" viewBox="0 0 11 11"><rect x="0" y="0" width="11" height="2.4" fill="#f2c27a"/><rect x="0" y="4.3" width="11" height="2.4" fill="#f2c27a"/><rect x="0" y="8.6" width="11" height="2.4" fill="#f2c27a"/></svg>
<div class="ui" style="left:544px;top:662px;color:#7b0f2e;word-spacing:1px">3 <span style="color:#000">=</span> <span style="color:#8a8a8a">{ResponseBodyEmitterReturnValueHandler@6728}</span></div>
<svg class="a" style="left:508px;top:686px" width="6" height="10" viewBox="0 0 6 10"><path d="M1 1L5 5L1 9" stroke="#666" fill="none" stroke-width="1.7"/></svg>
<svg class="a" style="left:529px;top:685px" width="11" height="11" viewBox="0 0 11 11"><rect x="0" y="0" width="11" height="2.4" fill="#f2c27a"/><rect x="0" y="4.3" width="11" height="2.4" fill="#f2c27a"/><rect x="0" y="8.6" width="11" height="2.4" fill="#f2c27a"/></svg>
<div class="ui" style="left:544px;top:683px;color:#7b0f2e;word-spacing:1px">4 <span style="color:#000">=</span> <span style="color:#8a8a8a">{StreamingResponseBodyReturnValueHandler@6729}</span></div>
<svg class="a" style="left:508px;top:707px" width="6" height="10" viewBox="0 0 6 10"><path d="M1 1L5 5L1 9" stroke="#666" fill="none" stroke-width="1.7"/></svg>
<svg class="a" style="left:529px;top:706px" width="11" height="11" viewBox="0 0 11 11"><rect x="0" y="0" width="11" height="2.4" fill="#f2c27a"/><rect x="0" y="4.3" width="11" height="2.4" fill="#f2c27a"/><rect x="0" y="8.6" width="11" height="2.4" fill="#f2c27a"/></svg>
<div class="ui" style="left:544px;top:704px;color:#7b0f2e;word-spacing:1px">5 <span style="color:#000">=</span> <span style="color:#8a8a8a">{HttpEntityMethodProcessor@6730}</span></div>
<svg class="a" style="left:508px;top:728px" width="6" height="10" viewBox="0 0 6 10"><path d="M1 1L5 5L1 9" stroke="#666" fill="none" stroke-width="1.7"/></svg>
<svg class="a" style="left:529px;top:727px" width="11" height="11" viewBox="0 0 11 11"><rect x="0" y="0" width="11" height="2.4" fill="#f2c27a"/><rect x="0" y="4.3" width="11" height="2.4" fill="#f2c27a"/><rect x="0" y="8.6" width="11" height="2.4" fill="#f2c27a"/></svg>
<div class="ui" style="left:544px;top:725px;color:#7b0f2e;word-spacing:1px">6 <span style="color:#000">=</span> <span style="color:#8a8a8a">{HttpHeadersReturnValueHandler@6731}</span></div>
<svg class="a" style="left:508px;top:749px" width="6" height="10" viewBox="0 0 6 10"><path d="M1 1L5 5L1 9" stroke="#666" fill="none" stroke-width="1.7"/></svg>
<svg class="a" style="left:529px;top:748px" width="11" height="11" viewBox="0 0 11 11"><rect x="0" y="0" width="11" height="2.4" fill="#f2c27a"/><rect x="0" y="4.3" width="11" height="2.4" fill="#f2c27a"/><rect x="0" y="8.6" width="11" height="2.4" fill="#f2c27a"/></svg>
<div class="ui" style="left:544px;top:746px;color:#7b0f2e;word-spacing:1px">7 <span style="color:#000">=</span> <span style="color:#8a8a8a">{CallableMethodReturnValueHandler@6732}</span></div>
<svg class="a" style="left:508px;top:770px" width="6" height="10" viewBox="0 0 6 10"><path d="M1 1L5 5L1 9" stroke="#666" fill="none" stroke-width="1.7"/></svg>
<svg class="a" style="left:529px;top:769px" width="11" height="11" viewBox="0 0 11 11"><rect x="0" y="0" width="11" height="2.4" fill="#f2c27a"/><rect x="0" y="4.3" width="11" height="2.4" fill="#f2c27a"/><rect x="0" y="8.6" width="11" height="2.4" fill="#f2c27a"/></svg>
<div class="ui" style="left:544px;top:767px;color:#7b0f2e;word-spacing:1px">8 <span style="color:#000">=</span> <span style="color:#8a8a8a">{DeferredResultMethodReturnValueHandler@6733}</span></div>
<svg class="a" style="left:508px;top:791px" width="6" height="10" viewBox="0 0 6 10"><path d="M1 1L5 5L1 9" stroke="#666" fill="none" stroke-width="1.7"/></svg>
<svg class="a" style="left:529px;top:790px" width="11" height="11" viewBox="0 0 11 11"><rect x="0" y="0" width="11" height="2.4" fill="#f2c27a"/><rect x="0" y="4.3" width="11" height="2.4" fill="#f2c27a"/><rect x="0" y="8.6" width="11" height="2.4" fill="#f2c27a"/></svg>
<div class="ui" style="left:544px;top:788px;color:#7b0f2e;word-spacing:1px">9 <span style="color:#000">=</span> <span style="color:#8a8a8a">{AsyncTaskMethodReturnValueHandler@6734}</span></div>
<svg class="a" style="left:508px;top:812px" width="6" height="10" viewBox="0 0 6 10"><path d="M1 1L5 5L1 9" stroke="#666" fill="none" stroke-width="1.7"/></svg>
<svg class="a" style="left:529px;top:811px" width="11" height="11" viewBox="0 0 11 11"><rect x="0" y="0" width="11" height="2.4" fill="#f2c27a"/><rect x="0" y="4.3" width="11" height="2.4" fill="#f2c27a"/><rect x="0" y="8.6" width="11" height="2.4" fill="#f2c27a"/></svg>
<div class="ui" style="left:544px;top:809px;color:#7b0f2e;word-spacing:1px">10 <span style="color:#000">=</span> <span style="color:#8a8a8a">{ModelAttributeMethodProcessor@6735}</span></div>
<svg class="a" style="left:508px;top:833px" width="6" height="10" viewBox="0 0 6 10"><path d="M1 1L5 5L1 9" stroke="#666" fill="none" stroke-width="1.7"/></svg>
<svg class="a" style="left:529px;top:832px" width="11" height="11" viewBox="0 0 11 11"><rect x="0" y="0" width="11" height="2.4" fill="#f2c27a"/><rect x="0" y="4.3" width="11" height="2.4" fill="#f2c27a"/><rect x="0" y="8.6" width="11" height="2.4" fill="#f2c27a"/></svg>
<div class="ui" style="left:544px;top:830px;color:#7b0f2e;word-spacing:1px">11 <span style="color:#000">=</span> <span style="color:#8a8a8a">{RequestResponseBodyMethodProcessor@6736}</span></div>
<svg class="a" style="left:508px;top:854px" width="6" height="10" viewBox="0 0 6 10"><path d="M1 1L5 5L1 9" stroke="#666" fill="none" stroke-width="1.7"/></svg>
<svg class="a" style="left:529px;top:853px" width="11" height="11" viewBox="0 0 11 11"><rect x="0" y="0" width="11" height="2.4" fill="#f2c27a"/><rect x="0" y="4.3" width="11" height="2.4" fill="#f2c27a"/><rect x="0" y="8.6" width="11" height="2.4" fill="#f2c27a"/></svg>
<div class="ui" style="left:544px;top:851px;color:#7b0f2e;word-spacing:1px">12 <span style="color:#000">=</span> <span style="color:#8a8a8a">{ViewNameMethodReturnValueHandler@6737}</span></div>
<svg class="a" style="left:508px;top:875px" width="6" height="10" viewBox="0 0 6 10"><path d="M1 1L5 5L1 9" stroke="#666" fill="none" stroke-width="1.7"/></svg>
<svg class="a" style="left:529px;top:874px" width="11" height="11" viewBox="0 0 11 11"><rect x="0" y="0" width="11" height="2.4" fill="#f2c27a"/><rect x="0" y="4.3" width="11" height="2.4" fill="#f2c27a"/><rect x="0" y="8.6" width="11" height="2.4" fill="#f2c27a"/></svg>
<div class="ui" style="left:544px;top:872px;color:#7b0f2e;word-spacing:1px">13 <span style="color:#000">=</span> <span style="color:#8a8a8a">{MapMethodProcessor@6738}</span></div>
<svg class="a" style="left:508px;top:896px" width="6" height="10" viewBox="0 0 6 10"><path d="M1 1L5 5L1 9" stroke="#666" fill="none" stroke-width="1.7"/></svg>
<svg class="a" style="left:529px;top:895px" width="11" height="11" viewBox="0 0 11 11"><rect x="0" y="0" width="11" height="2.4" fill="#f2c27a"/><rect x="0" y="4.3" width="11" height="2.4" fill="#f2c27a"/><rect x="0" y="8.6" width="11" height="2.4" fill="#f2c27a"/></svg>
<div class="ui" style="left:544px;top:893px;color:#7b0f2e;word-spacing:1px">14 <span style="color:#000">=</span> <span style="color:#8a8a8a">{ModelAttributeMethodProcessor@6739}</span></div>
<div class="a" style="left:0px;top:0px;width:994px;height:4px;background:#f0f0f0;"></div>
<div class="a" style="left:0px;top:4px;width:994px;height:1px;background:#a9a9a9;"></div>
<div class="a" style="left:0px;top:5px;width:994px;height:23px;background:#d6d5c3;"></div>
<div class="a" style="left:0px;top:28px;width:994px;height:1px;background:#a9a9a9;"></div>
<div class="a" style="left:0px;top:29px;width:994px;height:3px;background:#fffde8;"></div>
<div class="a" style="left:0px;top:32px;width:994px;height:1px;background:#a9a9a9;"></div>
<div class="a" style="left:205px;top:5px;width:1px;height:24px;background:#a9a9a9;"></div>
<svg class="a" style="left:-7px;top:11px" width="16" height="16" viewBox="0 0 16 16"><circle cx="7" cy="7" r="7" fill="#7fc6dd"/><path d="M8.9 5.4A2.5 2.5 0 1 0 8.9 8.8" stroke="#3c4246" fill="none" stroke-width="1.3"/><rect x="10" y="11" width="5" height="4" fill="#9aa6b4"/><path d="M11 11.5V9.8A1.5 1.5 0 0 1 14 9.8V11.5" stroke="#9aa6b4" fill="none" stroke-width="1"/></svg>
<div class="ui" style="left:11px;top:10px;color:#000;">InvocableHandlerMethod.java</div>
<svg class="a" style="left:190px;top:13px" width="9" height="9" viewBox="0 0 9 9"><path d="M0.5 0.5L8.5 8.5M8.5 0.5L0.5 8.5" stroke="#bcbcbc" stroke-width="1"/></svg>
<div class="a" style="left:206px;top:5px;width:260px;height:27px;background:#fffde8;"></div>
<svg class="a" style="left:215px;top:11px" width="16" height="16" viewBox="0 0 16 16"><circle cx="7" cy="7" r="7" fill="#7fc6dd"/><path d="M8.9 5.4A2.5 2.5 0 1 0 8.9 8.8" stroke="#3c4246" fill="none" stroke-width="1.3"/><rect x="10" y="11" width="5" height="4" fill="#9aa6b4"/><path d="M11 11.5V9.8A1.5 1.5 0 0 1 14 9.8V11.5" stroke="#9aa6b4" fill="none" stroke-width="1"/></svg>
<div class="ui" style="left:232px;top:10px;color:#000;">ServletInvocableHandlerMethod.java</div>
<svg class="a" style="left:451px;top:13px" width="9" height="9" viewBox="0 0 9 9"><path d="M0.5 0.5L8.5 8.5M8.5 0.5L0.5 8.5" stroke="#bcbcbc" stroke-width="1"/></svg>
<div class="a" style="left:466px;top:5px;width:1px;height:24px;background:#a9a9a9;"></div>
<div class="a" style="left:467px;top:5px;width:186px;height:23px;background:#d4d4d4;"></div>
<svg class="a" style="left:476px;top:11px" width="16" height="16" viewBox="0 0 16 16"><circle cx="7" cy="7" r="7" fill="#7fc6dd"/><path d="M8.9 5.4A2.5 2.5 0 1 0 8.9 8.8" stroke="#3c4246" fill="none" stroke-width="1.3"/></svg>
<div class="ui" style="left:494px;top:10px;color:#3a8c22;">HelloRestController.java</div>
<svg class="a" style="left:638px;top:13px" width="9" height="9" viewBox="0 0 9 9"><path d="M0.5 0.5L8.5 8.5M8.5 0.5L0.5 8.5" stroke="#bcbcbc" stroke-width="1"/></svg>
<div class="a" style="left:653px;top:5px;width:1px;height:24px;background:#a9a9a9;"></div>
<svg class="a" style="left:663px;top:11px" width="16" height="16" viewBox="0 0 16 16"><circle cx="7" cy="7" r="7" fill="#7fc6dd"/><path d="M8.9 5.4A2.5 2.5 0 1 0 8.9 8.8" stroke="#3c4246" fill="none" stroke-width="1.3"/><rect x="10" y="11" width="5" height="4" fill="#9aa6b4"/><path d="M11 11.5V9.8A1.5 1.5 0 0 1 14 9.8V11.5" stroke="#9aa6b4" fill="none" stroke-width="1"/></svg>
<div class="ui" style="left:681px;top:10px;color:#000;">NativeMethodAccessorImpl.java</div>
<svg class="a" style="left:873px;top:13px" width="9" height="9" viewBox="0 0 9 9"><path d="M0.5 0.5L8.5 8.5M8.5 0.5L0.5 8.5" stroke="#bcbcbc" stroke-width="1"/></svg>
<div class="a" style="left:888px;top:5px;width:1px;height:24px;background:#a9a9a9;"></div>
<svg class="a" style="left:898px;top:11px" width="16" height="16" viewBox="0 0 16 16"><circle cx="7" cy="7" r="7" fill="#7fc6dd"/><path d="M8.9 5.4A2.5 2.5 0 1 0 8.9 8.8" stroke="#3c4246" fill="none" stroke-width="1.3"/><rect x="10" y="11" width="5" height="4" fill="#9aa6b4"/><path d="M11 11.5V9.8A1.5 1.5 0 0 1 14 9.8V11.5" stroke="#9aa6b4" fill="none" stroke-width="1"/></svg>
<div class="ui" style="left:916px;top:10px;color:#000;">DelegatingMethodAccessorImpl.java</div>
<div class="a" style="left:0px;top:33px;width:994px;height:34px;background:#fef6d3;"></div>
<div class="a" style="left:0px;top:67px;width:994px;height:1px;background:#d3d3d3;"></div>
<div class="ui" style="left:-5px;top:43px;color:#000;">Alternative source available for the class org.springframework.web.servlet.mvc.method.annotation.ServletInvocableHandlerMethod</div>
<div class="a" style="left:791px;top:39px;width:240px;height:22px;background:#e6e6e6;border:1px solid #a9a9a9"></div>
<div class="ui" style="left:797px;top:43px;color:#000;">Maven: org.springframework:spring-webmvc:5.0.4</div>
</body></html>
